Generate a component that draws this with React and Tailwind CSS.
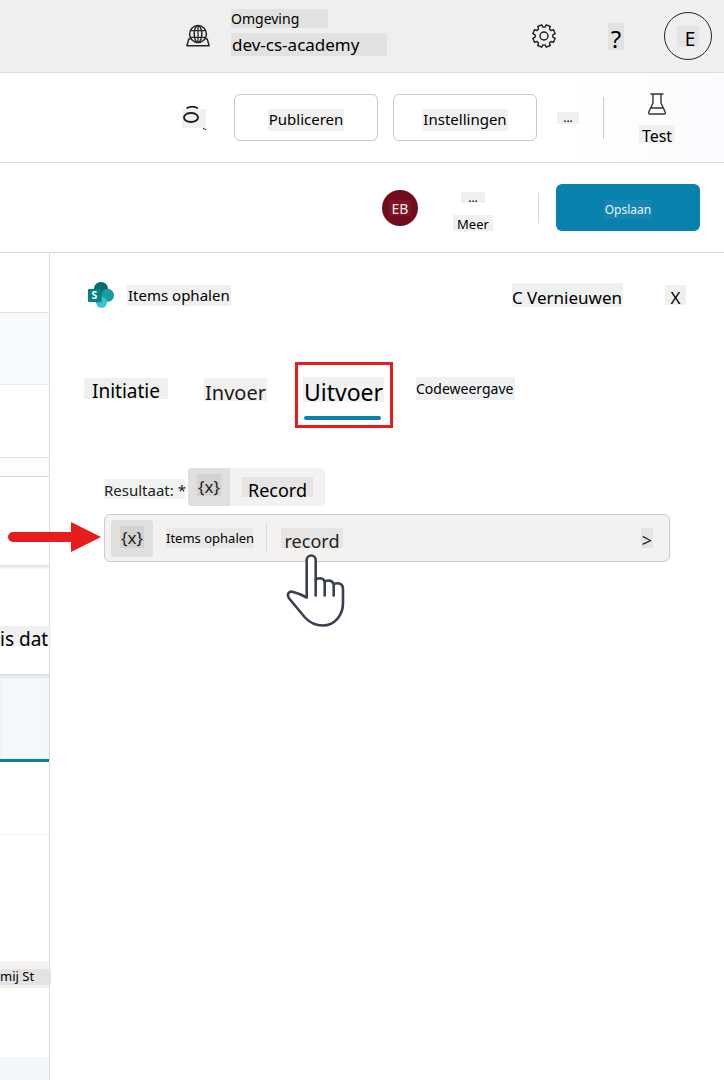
import React from "react";

function Chip({ className = "", children }) {
  return (
    <span className={`flex shrink-0 items-center whitespace-nowrap leading-none ${className}`}>
      {children}
    </span>
  );
}

function GlobeIcon() {
  return (
    <svg aria-hidden="true" className="h-6 w-6 shrink-0" viewBox="0 0 24 24" fill="none" stroke="#262626" strokeWidth="1.5">
      <circle cx="12" cy="10" r="8.4" />
      <ellipse cx="12" cy="10" rx="3.8" ry="8.4" />
      <path d="M12 1.6v16.8M4.6 6.600h14.800M4.600 13.400h14.800" strokeWidth="1.300" />
      <path d="M4.400 14.900H2.800L.9 21.700h22.200l-1.900-6.800h-1.600" strokeLinejoin="round" />
    </svg>
  );
}

function gearPath() {
  const points = [];
  const spread = [
    [-0.27, 8.9],
    [-0.19, 11.4],
    [0.19, 11.4],
    [0.27, 8.9],
  ];
  for (let i = 0; i < 8; i += 1) {
    const angle = (i * Math.PI) / 4 + Math.PI / 8;
    spread.forEach(([offset, r]) => {
      const x = 12 + r * Math.cos(angle + offset);
      const y = 12 + r * Math.sin(angle + offset);
      points.push(`${x.toFixed(2)} ${y.toFixed(2)}`);
    });
  }
  return `M${points.join("L")}Z`;
}

function GearIcon() {
  return (
    <svg aria-hidden="true" className="h-6 w-6" viewBox="0 0 24 24" fill="none" stroke="#1f1f1f" strokeWidth="1.4" strokeLinejoin="round">
      <path d={gearPath()} />
      <circle cx="12" cy="12" r="4" />
    </svg>
  );
}

function FlaskIcon() {
  return (
    <svg aria-hidden="true" className="h-6 w-5" viewBox="0 0 20 24" fill="none" stroke="#333" strokeWidth="1.4" strokeLinejoin="round">
      <path d="M3.500 1h13M6 1v9L1.900 18.800q-.9 2.200 1.200 2.200h13.800q2.100 0 1.200-2.200L14 10V1M3.800 15h12.400" />
    </svg>
  );
}

function CommentIcon() {
  return (
    <svg aria-hidden="true" className="h-7 w-7" viewBox="0 0 28 28" fill="none" stroke="#1f1f1f">
      <rect x="0" y="5" width="24" height="19" fill="#f0f0f0" stroke="none" />
      <path d="M4.500 4.300Q10 1 16 4.300" strokeWidth="1.600" />
      <ellipse cx="9" cy="13.500" rx="7" ry="4.500" strokeWidth="1.900" />
      <path d="M21 24.300l3 1.500" strokeWidth="1" />
    </svg>
  );
}

function SharePointIcon() {
  return (
    <svg aria-hidden="true" className="h-[26px] w-[26px]" viewBox="0 0 26 26">
      <circle cx="13" cy="7.200" r="7.200" fill="#036c70" />
      <circle cx="19.500" cy="13.300" r="6.500" fill="#1a9ba1" />
      <circle cx="13.500" cy="20.300" r="5.500" fill="#37c6d0" />
      <path d="M7 7.500h7v13H8z" fill="#024b4e" opacity=".35" />
      <rect x="0" y="7" width="13" height="13" rx="1" fill="#038387" />
      <text x="6.500" y="17.200" textAnchor="middle" fontSize="10.500" fontWeight="700" fill="#fff">S</text>
    </svg>
  );
}

function ArrowMark() {
  return (
    <svg aria-hidden="true" className="pointer-events-none absolute left-2 top-[269px] z-20 h-[30px] w-[93px]" viewBox="0 0 93 30" fill="#e91c1c">
      <path d="M5 10h58V0l30 15-30 15V20H5A5 5 0 0 1 5 10z" />
    </svg>
  );
}

function HandMark() {
  return (
    <svg aria-hidden="true" className="pointer-events-none absolute left-[182px] top-[39px] z-20 h-[75px] w-[60px]" viewBox="0 0 60 75" fill="#fff" stroke="#3c3f50" strokeWidth="2.6" strokeLinejoin="round" strokeLinecap="round">
      <path d="M20.700 44.500V7a4.500 4.500 0 0 1 9 0v19.500c4-2 8-1.500 9 2 4-1.700 7.500-.800 9 2.500 5.500-1.800 9.300 0 9.300 5v14C57 63 48 72.500 37 72.500c-8 0-13-2.500-18-8L3.200 45.500c-3-4.500 0-8 4-6.500 4.500 1 9.100 3 13.500 5.500z" />
      <path d="M29.700 26.500v16M38.700 28.500v14M47.700 31v11.500" fill="none" />
    </svg>
  );
}

function Backdrop() {
  return (
    <aside className="flex w-[50px] shrink-0 flex-col border-r border-[#dcdcdc] bg-white">
      <div className="h-15 border-b border-[#e2e2e2]" />
      <div className="h-18 border-b border-[#ececec] bg-[#f7fafd]" />
      <div className="h-[73px] border-b border-[#e4e4e4]" />
      <div className="h-[18px] bg-[#fdfdfd]" />
      <div className="h-[90px] border-y border-[#dedede] shadow-[0_2px_2px_#e6e6e6]" />
      <div className="h-[109px] border-b border-[#dcdcdc] pt-15">
        <Chip className="relative z-10 h-5 w-[51px] bg-[#f0f0f0] pt-1.5 text-[19px]">is dat</Chip>
      </div>
      <div className="h-[87px] border-b-3 border-[#0880ac] bg-[#f4f8fc] shadow-[inset_0_3px_3px_#e6e9ec]" />
      <div className="h-[73px] border-b border-[#f0f0f0]" />
      <div className="h-[126px]" />
      <div className="flex h-[27px] items-center bg-[#f3f2f1] pt-1">
        <Chip className="relative z-10 h-4 w-[51px] bg-[#e4e3e2] text-[13px]">mij St</Chip>
      </div>
      <div className="h-[69px]" />
      <div className="min-h-[22px] grow bg-[#f2f7fc]" />
    </aside>
  );
}

export default function App() {
  return (
    <div className="flex min-h-screen flex-col bg-white font-['Noto_Sans',sans-serif] text-black">
      <header className="flex h-[73px] items-center justify-end border-b border-[#dddddd] bg-[#efefef] pr-3">
        <GlobeIcon />
        <div className="ml-[21px] flex flex-col gap-[5px] pb-[7px]">
          <Chip className="h-[19px] w-[97px] bg-[#e2e2e2] text-sm">Omgeving</Chip>
          <Chip className="h-[23px] w-[156px] bg-[#e2e2e2] pl-px text-[17px]">dev-cs-academy</Chip>
        </div>
        <button type="button" aria-label="Instellingen" className="ml-[145px]">
          <GearIcon />
        </button>
        <button type="button" className="ml-[52px]">
          <Chip className="h-[27px] w-4 justify-center bg-[#e2e2e2] pt-1.5 text-2xl">?</Chip>
        </button>
        <button type="button" className="ml-10 flex h-12 w-12 items-center justify-center rounded-full border border-[#222]">
          <Chip className="h-[21px] w-[22px] justify-center bg-[#e4e4e4] pl-1 pt-1.5 text-[19px]">E</Chip>
        </button>
      </header>

      <div className="flex h-[90px] items-center justify-end border-b border-[#dcdcdc] bg-linear-to-r from-white from-80% to-[#fafbfe] pr-[49px]">
        <button type="button" aria-label="Opmerkingen" className="mr-6">
          <CommentIcon />
        </button>
        <div className="flex gap-[15px]">
          <button type="button" className="flex h-[47px] w-36 items-center justify-center rounded-md border border-[#c8c8c8] bg-white pt-1">
            <Chip className="h-[22px] bg-[#f0f0f0] px-px text-[15px]">Publiceren</Chip>
          </button>
          <button type="button" className="flex h-[47px] w-36 items-center justify-center rounded-md border border-[#c8c8c8] bg-white pt-1">
            <Chip className="h-[22px] bg-[#f0f0f0] px-px text-[15px]">Instellingen</Chip>
          </button>
        </div>
        <button type="button" className="ml-5">
          <Chip className="h-3 w-[22px] justify-center bg-[#f0f0f0] text-xs">...</Chip>
        </button>
        <div className="ml-6 h-[42px] w-px bg-[#cccccc]" />
        <button type="button" className="ml-[35px] flex flex-col items-center gap-2">
          <FlaskIcon />
          <Chip className="h-[18px] w-9 justify-center bg-[#f0f0f0] pt-1 text-base">Test</Chip>
        </button>
      </div>

      <div className="flex h-[90px] items-center justify-end border-b border-[#dcdcdc] pr-6">
        <div className="flex h-9 w-9 items-center justify-center rounded-full bg-[#740b1c] text-[#f3e4e6]">
          <Chip className="h-4 w-[22px] justify-center bg-[#7b1626] pt-0.5 text-sm">EB</Chip>
        </div>
        <button type="button" className="ml-[35px] flex flex-col items-center gap-3 pt-2">
          <Chip className="h-[11px] w-6 justify-center bg-[#f0f0f0] text-xs">...</Chip>
          <Chip className="h-4 w-10 justify-center bg-[#f0f0f0] pt-0.5 text-[13px]">Meer</Chip>
        </button>
        <div className="ml-[45px] h-[30px] w-px bg-[#d8d8d8]" />
        <button type="button" className="ml-[17px] flex h-[47px] w-36 items-center justify-center rounded-md bg-[#0881ad] pt-1 text-[#e6f3f8]">
          <Chip className="h-[19px] bg-[#1586b1] px-px text-xs">Opslaan</Chip>
        </button>
      </div>

      <div className="relative flex grow">
        <Backdrop />
        <ArrowMark />
        <main className="min-w-0 grow pt-[29px]">
          <div className="flex h-[26px] items-center pl-[38px] pr-[38px]">
            <SharePointIcon />
            <h1 className="ml-[13px] mr-auto">
              <Chip className="h-[21px] bg-[#f0f0f0] px-px text-[15px]">Items ophalen</Chip>
            </h1>
            <button type="button">
              <Chip className="h-6 bg-[#eeefef] pr-px pt-1 text-[17px]">C Vernieuwen</Chip>
            </button>
            <button type="button" className="ml-[42px]">
              <Chip className="h-5 w-[21px] justify-center bg-[#efefef] pt-1 text-[17px]">X</Chip>
            </button>
          </div>

          <nav className="mt-[54px] flex items-start pl-[34px]">
            <button type="button" className="pt-4">
              <Chip className="h-[21px] w-21 justify-center bg-[#eef0ef] pt-1.5 text-[19px]">Initiatie</Chip>
            </button>
            <button type="button" className="ml-9 pt-4">
              <Chip className="h-[23px] w-[63px] justify-center bg-[#f1f0ef] pt-1.5 text-xl text-[#1a1a1a]">Invoer</Chip>
            </button>
            <button type="button" className="ml-7 flex h-[66px] w-[98px] flex-col items-start border-3 border-[#e91c1c] pl-[5px] pt-3">
              <Chip className="h-[25px] w-[81px] justify-center bg-[#f1f1f1] pt-1.5 text-[23px]">Uitvoer</Chip>
              <span className="ml-px mt-3.5 h-1 w-[77px] rounded-full bg-[#0881ad]" />
            </button>
            <button type="button" className="ml-[23px] pt-[15px]">
              <Chip className="h-[23px] bg-[#eff0f1] pr-0.5 text-sm">Codeweergave</Chip>
            </button>
          </nav>

          <section className="mx-[54px] mt-10">
            <div className="flex items-center">
              <div className="pt-1">
                <Chip className="h-5 w-[81px] bg-[#f0f1f1] pt-0.5 text-[15px] text-[#222]">Resultaat: *</Chip>
              </div>
              <div className="ml-[3px] flex h-[38px] items-center overflow-hidden rounded-sm bg-[#f3f2f1]">
                <div className="flex h-full w-[42px] items-center justify-center bg-[#e1dfde] pb-1">
                  <Chip className="h-[22px] w-6 justify-center bg-[#d3d2d1] pt-0.5 text-[17px] text-[#222]">{"{x}"}</Chip>
                </div>
                <Chip className="mx-[12px] h-5 w-[71px] justify-center bg-[#e6e5e4] pt-1.5 text-lg">Record</Chip>
              </div>
            </div>

            <div className="relative mt-2">
              <button type="button" className="flex h-12 w-full items-center rounded-md border border-[#cccccc] bg-[#f3f2f1] px-1.5">
                <span className="flex h-[37px] w-[42px] items-center justify-center rounded-sm bg-[#e1dfde] pb-0.5">
                  <Chip className="h-[22px] w-6 justify-center bg-[#d3d2d1] text-[17px] text-[#222]">{"{x}"}</Chip>
                </span>
                <Chip className="ml-[13px] h-5 w-[87px] bg-[#e9e8e7] text-[13px]">Items ophalen</Chip>
                <span className="ml-[13px] h-[30px] w-px bg-[#dddcdb]" />
                <Chip className="ml-3.5 h-5 w-[62px] justify-center bg-[#e6e5e4] pt-1.5 text-lg text-[#222]">record</Chip>
                <Chip className="ml-auto mr-2.5 h-5 w-3 justify-center bg-[#e6e5e4] pt-1 text-lg text-[#222]">&gt;</Chip>
              </button>
              <HandMark />
            </div>
          </section>
        </main>
      </div>
    </div>
  );
}
